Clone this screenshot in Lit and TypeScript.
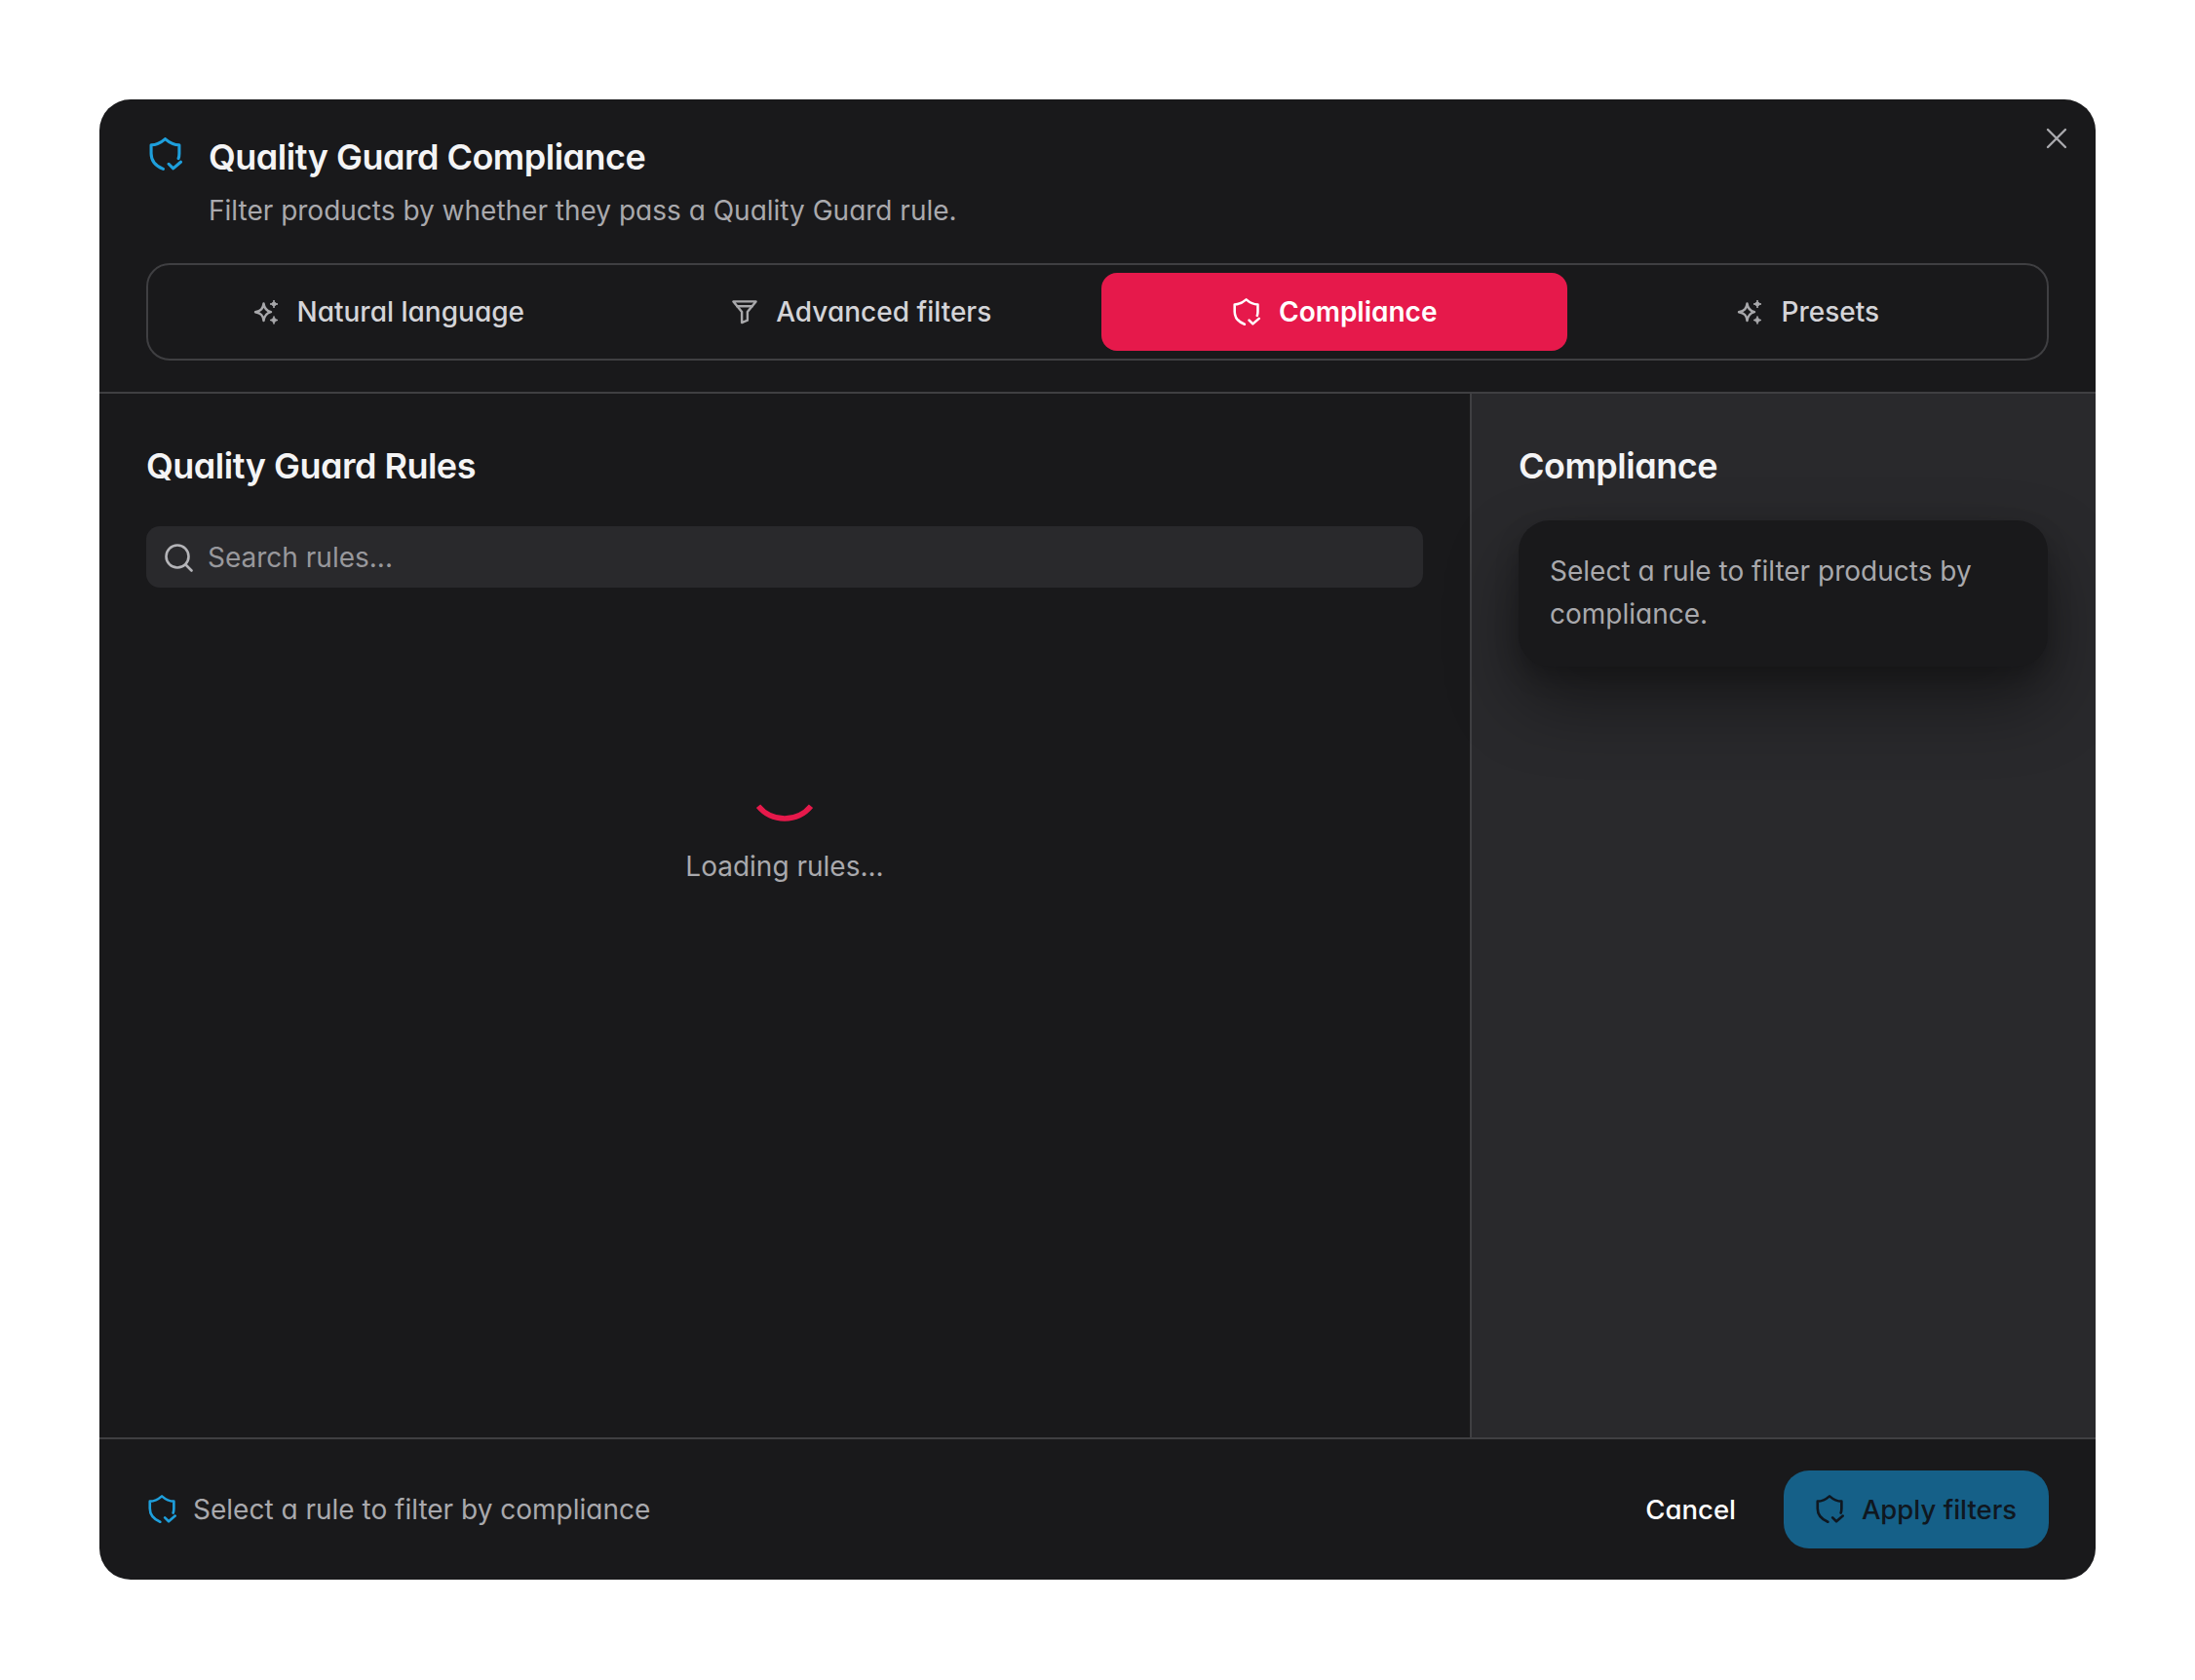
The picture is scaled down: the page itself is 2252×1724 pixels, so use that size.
import { LitElement, html, css } from "lit";
import { customElement } from "lit/decorators.js";

const shield = (cls: string) => html`<svg class=${cls} viewBox="0 0 33 34" fill="none" stroke="currentColor" stroke-width="3" stroke-linecap="round" stroke-linejoin="round"><path d="M14 31.5C6.5 28.5 2 23.5 2 16V7.5C7 7.5 12 5 16 1.5C20 5 25 7.5 30 7.5V16C30 17.8 29.8 19.6 29.2 21"/><path d="M19.5 26.5l4.5 4.5l7.5-6.5"/></svg>`;
const sparkle = html`<svg class="tabicon" viewBox="0 0 26 26" fill="none"><path d="M10.5 4.5C11.2 9.8 13.2 12 18 13.2C13.2 14.4 11.2 16.6 10.5 22C9.8 16.6 7.8 14.4 2 13.2C7.8 12 9.8 9.8 10.5 4.5Z" stroke="currentColor" stroke-width="2.4" stroke-linejoin="round"/><path d="M21 1C21.4 3.2 22.3 4.2 25 5C22.3 5.8 21.4 6.8 21 9C20.6 6.8 19.7 5.8 17 5C19.7 4.2 20.6 3.2 21 1Z" fill="currentColor" stroke="currentColor" stroke-width="1"/><path d="M21 17.5C21.4 19.7 22.3 20.7 25 21.5C22.3 22.3 21.4 23.3 21 25.5C20.6 23.3 19.7 22.3 17 21.5C19.7 20.7 20.6 19.7 21 17.5Z" fill="currentColor" stroke="currentColor" stroke-width="1"/></svg>`;
const filter = html`<svg class="tabicon" viewBox="0 0 27 26" fill="none" stroke="currentColor" stroke-width="2.5" stroke-linejoin="round" stroke-linecap="round"><path d="M1.5 2H25.5L16.5 13V22L10.5 24.5V13Z"/><path d="M5.5 7H21.5"/></svg>`;

@customElement("app-root")
export class AppRoot extends LitElement {
  static styles = css`
    :host { display: block; background: #fff; padding: 102px; width: 2252px; height: 1724px; box-sizing: border-box; font-family: Inter, "Liberation Sans", sans-serif; font-feature-settings: "cv11"; }
    .modal { position: relative; width: 2048px; height: 1519px; background: #19191b; border-radius: 32px; display: flex; flex-direction: column; overflow: hidden; color: #f4f4f5; }
    .close { position: absolute; right: 29px; top: 29px; width: 22px; height: 22px; color: #a9a9ad; }
    .header { padding: 37px 48px 32px; border-bottom: 2px solid #3f3f42; }
    .head { display: grid; grid-template-columns: 64px 1fr; row-gap: 13px; }
    .shield-lg { width: 34px; height: 35px; margin: 2px 0 0 3px; color: #1e9fdc; }
    h1 { margin: 0; font-size: 36px; line-height: 44px; font-weight: 600; letter-spacing: -0.5px; }
    .sub { grid-column: 2; font-size: 28px; line-height: 40px; color: #a9a9ad; }
    .tabs { margin-top: 34px; height: 100px; box-sizing: border-box; border: 2px solid #3f3f42; border-radius: 24px; padding: 8px 7px; display: grid; grid-template-columns: repeat(4, 1fr); gap: 8px; }
    .tab { border-radius: 16px; display: flex; align-items: center; justify-content: center; gap: 19px; padding-left: 2px; font-size: 28px; font-weight: 500; color: #d4d4d8; }
    .tab.on { background: #e6194b; color: #fff; font-weight: 600; }
    .tabicon { width: 26px; height: 26px; color: #a8a8ab; }
    .on .shield-sm { color: #fff; }
    .shield-sm { width: 28px; height: 29px; }
    .body { flex: 1; display: flex; min-height: 0; }
    .left { flex: 1; padding: 50px 48px 0; border-right: 2px solid #3f3f42; }
    .right { width: 640px; box-sizing: border-box; background: #29292c; padding: 50px 49px 0 48px; flex: none; }
    h2 { margin: 0; font-size: 36px; line-height: 48px; font-weight: 600; letter-spacing: -0.5px; }
    .search { margin-top: 38px; height: 63px; background: #29292c; border-radius: 14px; display: flex; align-items: center; padding-left: 18px; gap: 15px; font-size: 28px; color: #98989c; font-feature-settings: normal; }
    .search svg { width: 30px; height: 30px; color: #b4b4b8; flex: none; }
    .load { padding-top: 164px; display: flex; flex-direction: column; align-items: center; gap: 26px; font-size: 28px; line-height: 40px; color: #a9a9ad; font-feature-settings: normal; }
    .spin { width: 76px; height: 76px; color: #e6194b; }
    .card { margin-top: 32px; height: 150px; box-sizing: border-box; border-radius: 32px; background: #19191b; padding: 31px 32px 0; font-size: 28px; line-height: 43.5px; color: #a9a9ad; box-shadow: 0 36px 72px rgba(0,0,0,.42), 0 10px 24px rgba(0,0,0,.2); }
    .footer { height: 146px; box-sizing: border-box; border-top: 2px solid #3f3f42; padding: 0 48px; display: flex; align-items: center; }
    .note { display: flex; align-items: center; gap: 17px; font-size: 28px; color: #a9a9ad; flex: 1; }
    .shield-ft { width: 29px; height: 30px; color: #1e9fdc; margin-left: 2px; }
    .cancel { font-size: 27.5px; color: #fff; font-weight: 500; margin-right: 49px; }
    .apply { width: 272px; height: 80px; border-radius: 26px; background: #156088; color: #0f1720; display: flex; align-items: center; justify-content: center; gap: 18px; font-size: 27.5px; font-weight: 500; font-feature-settings: normal; }
    .apply .shield-ft { color: #0f1720; margin: 0; }
  `;
  render() {
    return html`<div class="modal">
      <svg class="close" viewBox="0 0 22 22" fill="none" stroke="currentColor" stroke-width="2.4" stroke-linecap="round"><path d="M2 2L20 20M20 2L2 20"/></svg>
      <div class="header">
        <div class="head">
          ${shield("shield-lg")}
          <h1>Quality Guard Compliance</h1>
          <div class="sub">Filter products by whether they pass a Quality Guard rule.</div>
        </div>
        <div class="tabs">
          <div class="tab">${sparkle}Natural language</div>
          <div class="tab">${filter}Advanced filters</div>
          <div class="tab on">${shield("shield-sm")}Compliance</div>
          <div class="tab">${sparkle}Presets</div>
        </div>
      </div>
      <div class="body">
        <div class="left">
          <h2>Quality Guard Rules</h2>
          <div class="search"><svg viewBox="0 0 30 30" fill="none" stroke="currentColor" stroke-width="2.6" stroke-linecap="round"><circle cx="14" cy="14" r="11.5"/><path d="M22.5 22.5L28.5 28.5"/></svg>Search rules...</div>
          <div class="load"><svg class="spin" viewBox="0 0 76 76" fill="none" stroke="currentColor" stroke-width="5.5"><path d="M11 60.2A35 35 0 0 0 65 60.2"/></svg>Loading rules...</div>
        </div>
        <div class="right">
          <h2>Compliance</h2>
          <div class="card">Select a rule to filter products by compliance.</div>
        </div>
      </div>
      <div class="footer">
        <div class="note">${shield("shield-ft")}Select a rule to filter by compliance</div>
        <div class="cancel">Cancel</div>
        <div class="apply">${shield("shield-ft")}Apply filters</div>
      </div>
    </div>`;
  }
}
